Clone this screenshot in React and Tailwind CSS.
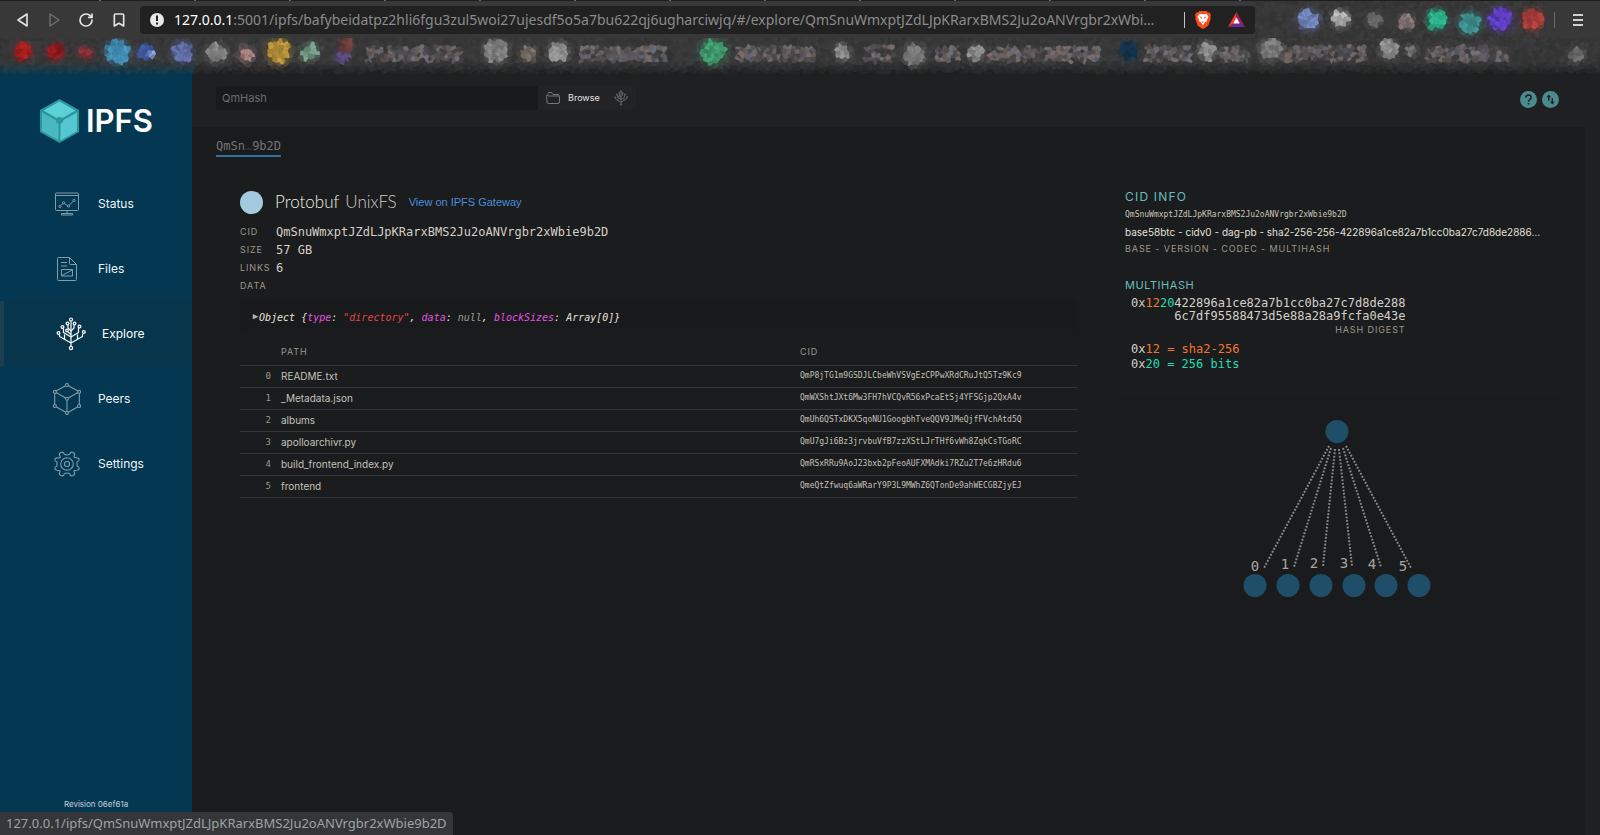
import { Bookmark, RotateCw } from "lucide-react";

const HOST = "127.0.0.1";
const CID = "QmSnuWmxptJZdLJpKRarxBMS2Ju2oANVrgbr2xWbie9b2D";

const links = [
  { path: "README.txt", cid: "QmP8jTG1m9GSDJLCbeWhVSVgEzCPPwXRdCRuJtQ5Tz9Kc9" },
  { path: "_Metadata.json", cid: "QmWXShtJXt6Mw3FH7hVCQvR56xPcaEtSj4YFSGjp2QxA4v" },
  { path: "albums", cid: "QmUh6QSTxDKX5qoNU1GoogbhTveQQV9JMeQjfFVchAtd5Q" },
  { path: "apolloarchivr.py", cid: "QmU7gJi6Bz3jrvbuVfB7zzXStLJrTHf6vWh8ZqkCsTGoRC" },
  { path: "build_frontend_index.py", cid: "QmRSxRRu9AoJ23bxb2pFeoAUFXMAdki7RZu2T7e6zHRdu6" },
  { path: "frontend", cid: "QmeQtZfwuq6aWRarY9P3L9MWhZ6QTonDe9ahWECGBZjyEJ" },
];

/* ---------- scrambled bookmark and extension icons ---------- */

// x, y, radius, rgb
const bookmarkBlobs = [
  [23, 14, 9, [165, 31, 31]],
  [56, 14, 9, [142, 26, 28]],
  [86, 15, 7, [135, 46, 54]],
  [118, 14, 12, [66, 140, 180]],
  [146, 14, 8, [66, 92, 165]],
  [152, 17, 4, [125, 148, 212]],
  [183, 14, 11, [92, 104, 158]],
  [217, 15, 10, [128, 128, 128]],
  [246, 16, 8, [162, 124, 124]],
  [279, 14, 12, [184, 146, 58]],
  [310, 14, 9, [112, 150, 128]],
  [343, 17, 8, [86, 72, 120]],
  [346, 7, 7, [104, 60, 58]],
  [496, 13, 12, [126, 126, 126]],
  [529, 16, 8, [116, 106, 98]],
  [559, 14, 10, [142, 142, 142]],
  [714, 14, 13, [62, 150, 108]],
  [843, 14, 8, [142, 142, 142]],
  [915, 17, 11, [122, 122, 122]],
  [976, 15, 8, [134, 134, 134]],
  [1129, 13, 10, [20, 52, 78]],
  [1208, 13, 9, [136, 136, 136]],
  [1271, 12, 11, [120, 120, 120]],
  [1389, 11, 9, [138, 138, 138]],
  [1412, 12, 6, [112, 112, 112]],
  [1577, 17, 8, [104, 104, 104]],
];

const bookmarkTitles = [
  [366, 461],
  [580, 666],
  [735, 815],
  [863, 894],
  [935, 959],
  [989, 1100],
  [1145, 1192],
  [1221, 1250],
  [1281, 1368],
  [1426, 1508],
];

const extensionBlobs = [
  [54, 19, 11, [108, 128, 180]],
  [86, 18, 9, [172, 172, 172]],
  [119, 19, 7, [104, 104, 104]],
  [151, 21, 8, [132, 116, 116]],
  [182, 19, 10, [42, 168, 132]],
  [215, 22, 11, [62, 142, 142]],
  [246, 19, 12, [92, 60, 190]],
  [278, 19, 11, [172, 62, 58]],
];

function noise(a, b) {
  const s = Math.sin(a * 127.1 + b * 311.7) * 43758.5453;
  return s - Math.floor(s);
}

function cellColor(x, y, i, j, height, blobs, titles) {
  const n = noise(i, j);
  let base = [56, 56, 56];
  if (titles) {
    const edge = Math.max(0, (y - height + 12) / 12);
    const low = x < 195 ? [14, 58, 80] : [34, 35, 36];
    base = base.map((c, k) => c + (low[k] - c) * edge);
  }
  let rgb = base.map((c) => c + (n - 0.5) * 10);
  for (const [from, to] of titles || []) {
    if (x > from && x < to && Math.abs(y - 16) < 8) {
      const t = noise(i + 9, j + 3);
      const hue = noise(i + 31, j + 17);
      const ink = [108 + hue * 22, 112, 128 - hue * 24];
      rgb = rgb.map((c, k) => c + (ink[k] - c) * t);
    }
  }
  for (const [bx, by, r, ink] of blobs) {
    const d = Math.hypot(x - bx, y - by) / r;
    if (d < 1.5) {
      const f = d < 0.95 ? 1 : (1.5 - d) * 0.6;
      const shade = 0.85 + n * 0.3;
      rgb = rgb.map((c, k) => c + (ink[k] * shade - c) * f);
    }
  }
  return `rgb(${rgb.map((c) => Math.round(Math.min(255, c))).join(",")})`;
}

// keeps the part of the polygon that is nearer to p than to q
function clip(poly, p, q) {
  const side = ([x, y]) => Math.hypot(x - q[0], y - q[1]) ** 2 - Math.hypot(x - p[0], y - p[1]) ** 2;
  const out = [];
  poly.forEach((a, k) => {
    const b = poly[(k + 1) % poly.length];
    const sa = side(a);
    const sb = side(b);
    if (sa >= 0) out.push(a);
    if (sa >= 0 !== sb >= 0) {
      const t = sa / (sa - sb);
      out.push([a[0] + (b[0] - a[0]) * t, a[1] + (b[1] - a[1]) * t]);
    }
  });
  return out;
}

function Mosaic({ width, height, blobs, titles, className }) {
  const size = 4;
  const seed = (i, j) => [(i + noise(i + 3, j + 7)) * size, (j + noise(i + 11, j + 5)) * size];
  const cells = [];
  for (let i = -1; i * size < width + size; i++) {
    for (let j = -1; j * size < height + size; j++) {
      const p = seed(i, j);
      let poly = [
        [p[0] - 8, p[1] - 8],
        [p[0] + 8, p[1] - 8],
        [p[0] + 8, p[1] + 8],
        [p[0] - 8, p[1] + 8],
      ];
      for (let a = -2; a <= 2; a++) {
        for (let b = -2; b <= 2; b++) {
          if (a || b) poly = clip(poly, p, seed(i + a, j + b));
        }
      }
      const fill = cellColor(p[0], p[1], i, j, height, blobs, titles);
      cells.push(
        <polygon
          key={`${i}:${j}`}
          points={poly.map(([x, y]) => `${x.toFixed(1)},${y.toFixed(1)}`).join(" ")}
          fill={fill}
          stroke={fill}
          strokeWidth="0.5"
        />
      );
    }
  }
  return (
    <svg viewBox={`0 0 ${width} ${height}`} preserveAspectRatio="none" className={className} aria-hidden="true">
      {cells}
    </svg>
  );
}

/* ---------- icons ---------- */

function StatusIcon() {
  return (
    <svg viewBox="0 0 24 24" className="h-6 w-6" fill="none" stroke="currentColor" strokeWidth="1">
      <rect x="0.5" y="1" width="23" height="17.5" rx="1" />
      <path d="M0.5 3.5h23M12 18.5v3M6.5 21.5h11v1.5h-11z" />
      <path d="M5.8 13.6L8 11.4M9.4 11.6L12.4 13.6M14.4 13.2L18 9.4" />
      <circle cx="5" cy="14.4" r="1.1" />
      <circle cx="8.6" cy="10.8" r="1.1" />
      <circle cx="13.5" cy="14" r="1.1" />
      <circle cx="19" cy="8.5" r="1.1" />
    </svg>
  );
}

function FilesIcon() {
  return (
    <svg viewBox="0 0 24 24" className="h-6 w-6" fill="none" stroke="currentColor" strokeWidth="1">
      <path d="M3.5 0.5H14.5L21.5 7.5V22.5a1 1 0 0 1-1 1H3.5a1 1 0 0 1-1-1V1.5a1 1 0 0 1 1-1z" />
      <path d="M14.5 0.5v6a1 1 0 0 0 1 1h6M6 5.5h6M6 9h6" />
      <path d="M6.5 12.5h11v6.5h-11zM7 18.5L17.5 12.8" />
    </svg>
  );
}

function TreeIcon({ className }) {
  return (
    <svg viewBox="0 0 30 34" className={className} fill="none" stroke="currentColor" strokeWidth="1.2">
      <path d="M15 4v25M15 26L3.5 19.5V17.5M15 26l11.5-6.5V17M15 20L7.5 15.5V11.5M15 20l7.5-4.5V11M8.5 22v-4.5M21.5 22v-4.5" />
      <path d="M15 14l-3-3V8M15 14l3-3V8M15 17.5l-3-2.5" />
      <circle cx="15" cy="2.5" r="1.5" />
      <circle cx="11.5" cy="6.5" r="1.4" />
      <circle cx="18.5" cy="6.5" r="1.4" />
      <circle cx="6.5" cy="10" r="1.4" />
      <circle cx="23.5" cy="9.5" r="1.4" />
      <circle cx="2.5" cy="16" r="1.4" />
      <circle cx="27.8" cy="15" r="1.4" />
      <circle cx="11" cy="13.5" r="1.3" />
      <circle cx="15" cy="31" r="1.6" />
    </svg>
  );
}

function PeersIcon() {
  return (
    <svg viewBox="0 0 28 32" className="h-8 w-7" fill="none" stroke="currentColor" strokeWidth="1.1">
      <path d="M12.7 2.7L3 8M15.3 2.7L25 8M1.7 10.5v11M26.3 10.5v11M3 23.8l9.7 5.5M25 23.8l-9.7 5.5M3 9.5l9.7 5.5M25 9.5l-9.7 5.5M14 17.5v11" />
      <circle cx="14" cy="2" r="1.5" />
      <circle cx="1.9" cy="8.9" r="1.5" />
      <circle cx="26.1" cy="8.9" r="1.5" />
      <circle cx="1.9" cy="23" r="1.5" />
      <circle cx="26.1" cy="23" r="1.5" />
      <circle cx="14" cy="15.8" r="1.5" />
      <circle cx="14" cy="30" r="1.5" />
    </svg>
  );
}

function SettingsIcon() {
  return (
    <svg viewBox="0 0 26 26" className="h-[26px] w-[26px]" fill="none" stroke="currentColor" strokeWidth="1.1">
      <path d="M10.3 3.2q-.5-2.300-2.300-2.100L6 2q-1.300 1 0 3.200T3.200 6.800Q.8 7 .8 8.800q.2 1.500 2.200 2.300v3.800q-2 .8-2.200 2.300 0 1.800 2.400 2 3.100 0 2.800 1.600-1.300 2.200 0 3.200l2 .9q1.800.2 2.300-2.100 2.700-1.500 5.400 0 .5 2.300 2.300 2.100l2-.9q1.300-1 0-3.200-.3-1.600 2.800-1.600 2.400-.2 2.400-2-.2-1.500-2.200-2.300v-3.800q2-.8 2.200-2.300 0-1.800-2.400-2-3.100 0-2.800-1.600 1.300-2.200 0-3.200l-2-.9q-1.800-.2-2.300 2.100-2.700 1.500-5.400 0z" />
      <circle cx="13" cy="13" r="6.3" />
      <circle cx="13" cy="13" r="2.5" />
    </svg>
  );
}

function FolderIcon() {
  return (
    <svg viewBox="0 0 14 12" className="h-3 w-[14px]" fill="none" stroke="currentColor">
      <path d="M2 2.5V1.5a1 1 0 0 1 1-1h2.500l1.500 2h5a1 1 0 0 1 1 1v1M2 4h10.500a1 1 0 0 1 1 1v5a1.500 1.500 0 0 1-1.500 1.500H2.500A1.500 1.500 0 0 1 1 10L.5 4.500A1 1 0 0 1 1 3z" />
    </svg>
  );
}

function CubeLogo() {
  return (
    <svg viewBox="0 0 39 44" className="h-11 w-[39px]">
      <path d="M19.5 0L39 11v22L19.5 44 0 33V11z" fill="#2c9699" />
      <path d="M19.5 2.5L35.5 11.5 22.5 19q-3-2.200-6 0L3.500 11.500z" fill="#5bd0d5" />
      <path d="M2 13.5L15.5 21q.2 2.800 3 4v16.500L2 32z" fill="#49b8c0" />
      <path d="M37 13.5L23.5 21q-.2 2.800-3 4v16.500L37 32z" fill="#54c7d2" />
    </svg>
  );
}

function BraveIcon() {
  return (
    <svg viewBox="0 0 16 18" className="h-[18px] w-4">
      <path d="M4.5 0h7l1.500 1.500 1.500-.2L16 4l-.7 2 .5 1.500L13.500 14q-.3 1-5.500 4-5.200-3-5.500-4L.2 7.500.7 6 0 4l1.500-2.700 1.500.2z" fill="#fb4a1c" />
      <path d="M4.500 2.800l3.500.5 3.500-.5L13.500 5.800 12.200 8.200 12 10l-2.200 1.500L8 14.500l-1.800-3L4 10 3.800 8.200 2.500 5.800z" fill="#fff" />
      <path d="M4.500 6l2.200.6-.6 1.200M11.500 6l-2.200.6.6 1.200M6.800 10.500L8 11.500l1.200-1" fill="none" stroke="#fb4a1c" strokeWidth="0.8" />
    </svg>
  );
}

function RewardsIcon() {
  return (
    <svg viewBox="0 0 17 15" className="h-[15px] w-[17px]">
      <path d="M8.500 0L0 15l8.500-5.500z" fill="#ff3d1f" />
      <path d="M8.500 0L17 15 8.500 9.500z" fill="#9e1f63" />
      <path d="M0 15h17L8.500 9z" fill="#662d91" />
      <path d="M8.500 5.500l3.200 6H5.300z" fill="#fff" />
    </svg>
  );
}

/* ---------- browser ---------- */

function BrowserChrome() {
  return (
    <header className="shrink-0 bg-[#383838] font-['Noto_Sans',sans-serif]">
      {/* bottom edge of the tab strip */}
      <div className="flex h-px bg-[#1e1e1e] pl-1.5">
        {Array.from({ length: 13 }, (_, i) => (
          <span key={i} className="w-[95px] border-r-2 border-[#6a6a6a]" />
        ))}
      </div>
      <div className="flex h-[37px] items-center">
        <div className="flex w-[140px] shrink-0 items-center justify-between pr-[13px] pl-4 text-[#e4e4e4]">
          <button aria-label="Back">
            <svg viewBox="0 0 14 14" className="h-3.5 w-3.5" fill="none" stroke="currentColor" strokeWidth="1.6" strokeLinejoin="round">
              <path d="M11 1v12L2 7z" />
            </svg>
          </button>
          <button aria-label="Forward" className="text-[#717171]">
            <svg viewBox="0 0 14 14" className="h-3.5 w-3.5" fill="none" stroke="currentColor" strokeWidth="1.4" strokeLinejoin="round">
              <path d="M3 1v12l9-6z" />
            </svg>
          </button>
          <button aria-label="Reload">
            <RotateCw size={16} strokeWidth={2.5} />
          </button>
          <button aria-label="Bookmark this page">
            <Bookmark size={16} strokeWidth={2.5} />
          </button>
        </div>

        <div className="flex h-7 min-w-0 flex-1 items-center gap-2.5 rounded bg-[#212121] pr-2.5 pl-2.5">
          <svg viewBox="0 0 14 14" className="h-3.5 w-3.5 shrink-0" aria-hidden="true">
            <circle cx="7" cy="7" r="7" fill="#e8e8e8" />
            <path d="M7 2.500v5.500M7 9.500v2" stroke="#212121" strokeWidth="2" />
          </svg>
          <div className="min-w-0 flex-1 truncate text-sm leading-6 text-[#8b8b8b]">
            <span className="text-white">{HOST}</span>
            :5001/ipfs/bafybeidatpz2hli6fgu3zul5woi27ujesdf5o5a7bu622qj6ugharciwjq/#/explore/QmSnuWmxptJZdLJpKRarxBMS2Ju2oANVrgbr2xWbi…
          </div>
          <span className="h-4 w-px bg-[#c4c4c4]" />
          <div className="flex items-center gap-[17px]">
            <button aria-label="Brave Shields">
              <BraveIcon />
            </button>
            <button aria-label="Brave Rewards">
              <RewardsIcon />
            </button>
          </div>
        </div>

        <div className="flex w-[345px] shrink-0 items-center">
          <Mosaic width={290} height={37} blobs={extensionBlobs} className="h-[37px] w-[290px]" />
          <span className="ml-[9px] h-4 w-px bg-[#6b6b6b]" />
          <button aria-label="Menu" className="ml-[18px] flex w-[10px] flex-col gap-[3px]">
            <span className="h-0.5 w-full bg-[#d0d0d0]" />
            <span className="h-0.5 w-full bg-[#d0d0d0]" />
            <span className="h-0.5 w-full bg-[#d0d0d0]" />
          </button>
        </div>
      </div>
      <Mosaic width={1600} height={36} blobs={bookmarkBlobs} titles={bookmarkTitles} className="block h-9 w-full" />
    </header>
  );
}

/* ---------- sidebar ---------- */

function NavLink({ label, icon, active }) {
  return (
    <a
      href={`#/${label.toLowerCase()}`}
      className={
        active
          ? "flex h-[65px] items-center border-l-4 border-[#1a3f50] bg-[#07364c] text-white"
          : "flex h-[65px] items-center text-[#f0f4f6]"
      }
    >
      <span className={active ? "ml-[51px] flex w-8 justify-center" : "ml-[51px] flex w-8 justify-center text-[#7f9dab]"}>
        {icon}
      </span>
      <span className="ml-[15px] text-xs">{label}</span>
    </a>
  );
}

function Sidebar() {
  return (
    <nav className="flex w-48 shrink-0 flex-col bg-[#043852]">
      <a href="#/welcome" className="mt-[25px] mb-7 ml-10 flex items-center gap-[7px] text-[31px] leading-[44px] font-semibold text-white">
        <CubeLogo />
        IPFS
      </a>
      <NavLink label="Status" icon={<StatusIcon />} />
      <NavLink label="Files" icon={<FilesIcon />} />
      <NavLink label="Explore" icon={<TreeIcon className="h-[34px] w-[30px]" />} active />
      <NavLink label="Peers" icon={<PeersIcon />} />
      <NavLink label="Settings" icon={<SettingsIcon />} />
      <p className="mt-auto pb-[25px] text-center text-[8px] leading-3 text-[#c3d0d7]">Revision 06ef61a</p>
    </nav>
  );
}

/* ---------- explore page ---------- */

function TopBar() {
  return (
    <div className="flex h-[53px] shrink-0 items-start justify-between bg-[#1e2021] pt-3 pr-[41px] pl-6">
      <form className="flex h-6 min-w-0 flex-1 text-[#8c8c8c]">
        <input
          aria-label="QmHash"
          placeholder="QmHash"
          className="w-[322px] rounded-l-sm bg-[#191a1b] px-1.5 text-[11px] text-gray-200 placeholder:text-[#6c6c6c]"
        />
        <button type="button" className="flex items-center gap-2 bg-[#222324] pr-1.5 pl-2 text-[9px] text-[#e2e2e2]">
          <span className="text-[#77797a]">
            <FolderIcon />
          </span>
          Browse
        </button>
        <button type="button" aria-label="Explore" className="rounded-r-sm bg-[#222324] px-2">
          <TreeIcon className="h-4 w-3.5" />
        </button>
      </form>
      <div className="flex gap-[5px] pt-[5px]">
        <button aria-label="Help">
          <svg viewBox="0 0 17 17" className="h-[17px] w-[17px]" fill="none">
            <circle cx="8.500" cy="8.500" r="8.500" fill="#4b8b90" />
            <path d="M5.800 6.600Q6 4 8.500 4q2.700.1 2.700 2.400 0 1.200-1.400 2.100-1.300.9-1.300 2.200M8.500 12v1.600" stroke="#1e2021" strokeWidth="1.5" />
          </svg>
        </button>
        <button aria-label="Connection">
          <svg viewBox="0 0 17 17" className="h-[17px] w-[17px]" fill="none">
            <circle cx="8.500" cy="8.500" r="8.500" fill="#4b8b90" />
            <path d="M4.500 6.300h4.600L6.800 3.600zM8 10.700h4.600L10.300 13.400z" fill="#1e2021" />
            <path d="M6.800 5.500v4.300M10.300 11.500V7.200" stroke="#1e2021" strokeWidth="1.5" />
          </svg>
        </button>
      </div>
    </div>
  );
}

function Field({ label, children }) {
  return (
    <div className="flex h-[18px] items-center">
      <dt className="w-9 text-[9px] tracking-widest text-[#9c978b]">{label}</dt>
      <dd className="font-['DejaVu_Sans_Mono',monospace] text-[12px] leading-[18px] text-[#d3d0c9]">{children}</dd>
    </div>
  );
}

function ObjectInfo() {
  return (
    <section className="min-w-0 flex-1 rounded bg-[#1b1c1d] px-6 pt-[23px] pb-[31px]">
      <h2 className="flex h-6 items-center font-['Lato',sans-serif] text-[17px] leading-6 font-light">
        <span className="mr-3 h-[23px] w-[23px] rounded-full bg-[#a3cbe0]" />
        <span className="mr-1.5 text-[#f0ede7]">Protobuf</span>
        <span className="mr-3 text-[#cfccc6]">UnixFS</span>
        <a href={`/ipfs/${CID}`} className="font-['Liberation_Sans',sans-serif] text-[11px] font-normal text-[#4a8fdb]">
          View on IPFS Gateway
        </a>
      </h2>

      <dl className="mt-[9px]">
        <Field label="CID">{CID}</Field>
        <Field label="SIZE">57 GB</Field>
        <Field label="LINKS">6</Field>
        <Field label="DATA" />
      </dl>

      <button className="mt-1 flex h-9 w-full items-center rounded bg-[#191a1b] px-3 font-['DejaVu_Sans_Mono',monospace] text-[10px] whitespace-pre text-[#e6e3da] italic">
        <span className="w-[7px] text-[9px] text-[#b5b2aa] not-italic">▶</span>
        <span>
          {"Object {"}
          <span className="text-[#e452e4]">type</span>
          {": "}
          <span className="text-[#e0454a]">"directory"</span>
          {", "}
          <span className="text-[#e452e4]">data</span>
          {": "}
          <span className="text-[#a09b8f]">null</span>
          {", "}
          <span className="text-[#e452e4]">blockSizes</span>
          {": Array[0]}"}
        </span>
      </button>

      <table className="mt-1 w-full table-fixed border-collapse text-left text-[#c4c1b9]">
        <thead>
          <tr className="h-[26px] border-b border-[#343637] text-[9px] tracking-widest text-[#9c978b]">
            <th className="w-[41px]" aria-label="Index" />
            <th className="font-normal">PATH</th>
            <th className="w-[277px] font-normal">CID</th>
          </tr>
        </thead>
        <tbody>
          {links.map((link, i) => (
            <tr key={link.cid} className="h-[22px] border-b border-[#343637]">
              <td className="pr-2.5 text-right font-['DejaVu_Sans_Mono',monospace] text-[9px] leading-4 text-[#9c978b]">{i}</td>
              <td className="text-[10px] leading-4">{link.path}</td>
              <td className="font-['DejaVu_Sans_Mono',monospace] text-[8px] leading-4">{link.cid}</td>
            </tr>
          ))}
        </tbody>
      </table>
    </section>
  );
}

function CidInfo() {
  return (
    <section className="rounded bg-[#1b1c1d] pt-5 pr-3 pb-6 pl-3">
      <h3 className="text-[12px] leading-5 tracking-widest text-[#69bdbd]">CID INFO</h3>
      <p className="font-['DejaVu_Sans_Mono',monospace] text-[8px] leading-4 text-[#c9c5bb]">{CID}</p>
      <p className="truncate text-[10px] leading-[18px] text-[#e2e0dc]">
        base58btc - cidv0 - dag-pb - sha2-256-256-422896a1ce82a7b1cc0ba27c7d8de2886…
      </p>
      <p className="text-[9px] leading-4 tracking-widest text-[#9c978b]">BASE - VERSION - CODEC - MULTIHASH</p>

      <h3 className="mt-[18px] text-[11px] leading-5 tracking-wider text-[#69bdbd]">MULTIHASH</h3>
      <div className="w-fit pl-1.5 font-['DejaVu_Sans_Mono',monospace] text-[12px] leading-[13px] text-[#d3d0c9]">
        <p className="mt-0.5">
          0x<span className="text-[#f0762f]">12</span>
          <span className="text-[#1fdcb0]">20</span>422896a1ce82a7b1cc0ba27c7d8de288
        </p>
        <p className="text-right">6c7df95588473d5e88a28a9fcfa0e43e</p>
        <p className="text-right font-['Inter',sans-serif] text-[9px] tracking-widest text-[#9c978b]">HASH DIGEST</p>
        <p className="mt-1.5 leading-[15px]">
          0x<span className="text-[#f0762f]">12 = sha2-256</span>
        </p>
        <p className="leading-[15px]">
          0x<span className="text-[#1fdcb0]">20 = 256 bits</span>
        </p>
      </div>
    </section>
  );
}

const edges = [
  { from: [94, 27], to: [29, 149], node: 20, label: [20, 152] },
  { from: [96, 29], to: [59, 148], node: 53, label: [50, 150] },
  { from: [100, 30], to: [88, 147], node: 86, label: [79, 149] },
  { from: [104, 30], to: [117, 147], node: 119, label: [109, 149] },
  { from: [108, 29], to: [146, 148], node: 151, label: [137, 150] },
  { from: [111, 27], to: [176, 149], node: 184, label: [168, 152] },
];

function LinkGraph() {
  return (
    <svg viewBox="0 0 204 180" className="mt-[23px] ml-[122px] h-[180px] w-[204px]" role="img" aria-label="Links of the object">
      <circle cx="102" cy="12.500" r="11.500" fill="#1f4f68" />
      {edges.map(({ from, to, node, label }, i) => (
        <g key={node}>
          <line x1={from[0]} y1={from[1]} x2={to[0]} y2={to[1]} stroke="#8a8a8a" strokeWidth="2" strokeDasharray="1.800 1.600" />
          <circle cx={node} cy="166.500" r="11.500" fill="#1f4f68" />
          <text x={label[0]} y={label[1]} textAnchor="middle" fill="#a5a5a5" className="font-['DejaVu_Sans_Mono',monospace] text-[14px]">
            {i}
          </text>
        </g>
      ))}
    </svg>
  );
}

export default function App() {
  return (
    <div className="flex min-h-screen flex-col bg-[#1a1b1c] font-['Inter',sans-serif]">
      <BrowserChrome />
      <div className="flex flex-1">
        <Sidebar />
        <div className="flex min-w-0 flex-1 flex-col">
          <TopBar />
          <div className="flex flex-1">
            <main className="min-w-0 flex-1 px-6 pt-2.5">
              <a href={`#/explore/${CID}`} className="block w-fit border-b-2 border-[#2e7199] font-['DejaVu_Sans_Mono',monospace] text-[12px] leading-[18px] text-[#747474]">
                QmSn<span className="text-[#363738]">…</span>9b2D
              </a>
              <div className="mt-2.5 flex items-start gap-3">
                <ObjectInfo />
                <div className="w-[448px] shrink-0">
                  <CidInfo />
                  <LinkGraph />
                </div>
              </div>
            </main>
            <div className="w-[15px] bg-[#1e2022]" />
          </div>
        </div>
      </div>
      <div className="fixed bottom-0 left-0 rounded-tr bg-[#35363a] px-1.5 font-['Noto_Sans',sans-serif] text-[13px] leading-[23px] text-[#9ea2a6]">
        {HOST}/ipfs/{CID}
      </div>
    </div>
  );
}
